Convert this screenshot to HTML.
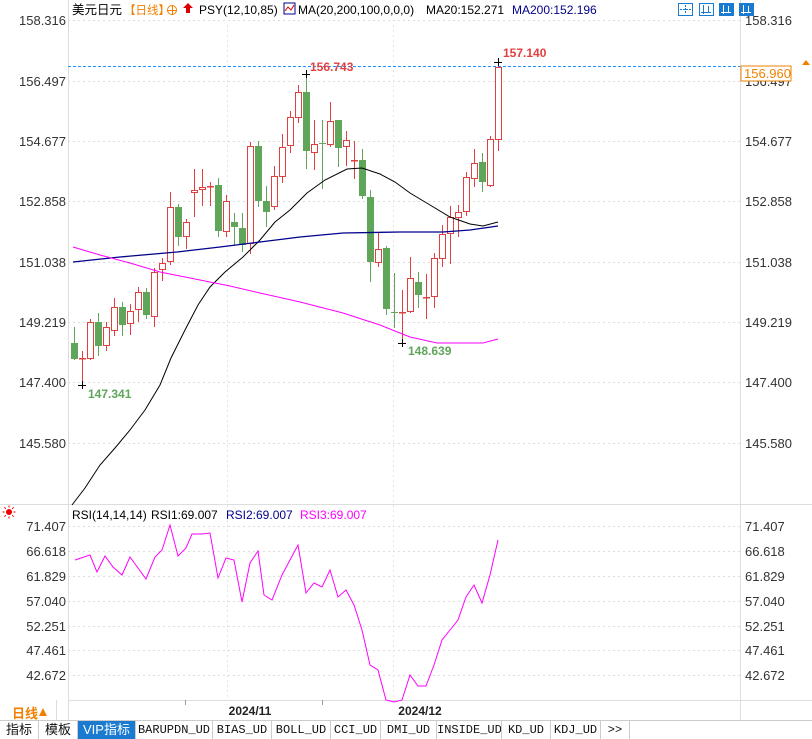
<!DOCTYPE html>
<html><head><meta charset="utf-8">
<style>
body{margin:0;width:812px;height:738px;overflow:hidden;background:#fff;font-family:"Liberation Sans","Noto Sans CJK SC",sans-serif;}
svg{position:absolute;left:0;top:0}
text{font-family:"Liberation Sans","Noto Sans CJK SC",sans-serif}
.tabs{position:absolute;left:0;top:720px;width:812px;height:18px;border-top:1px solid #ccc;background:#fff;display:flex;font-size:12px;font-family:"Liberation Mono","Noto Sans CJK SC",monospace}
.tabs div{border-right:1px solid #ccc;height:18px;line-height:18px;text-align:center;color:#111;white-space:nowrap;overflow:hidden}
.tabs .c{font-family:"Liberation Sans","Noto Sans CJK SC",sans-serif;font-size:13px}
</style></head><body>
<svg id="s" width="812" height="738" xmlns="http://www.w3.org/2000/svg"></svg>
<div class="tabs">
<div class="c" style="width:38px">指标</div><div class="c" style="width:38px">模板</div><div class="c" style="width:57px;background:#1a7ad0;color:#fff">VIP指标</div><div style="width:76px">BARUPDN_UD</div><div style="width:58px">BIAS_UD</div><div style="width:58px">BOLL_UD</div><div style="width:49px">CCI_UD</div><div style="width:55px">DMI_UD</div><div style="width:64px">INSIDE_UD</div><div style="width:48px">KD_UD</div><div style="width:49px">KDJ_UD</div><div style="width:28px">&gt;&gt;</div>
</div>
<script>
var S=document.getElementById('s'),h='';
function t(x,y,s,c,a,sz,w){h+='<text x="'+x+'" y="'+y+'" fill="'+c+'" font-size="'+(sz||13)+'" text-anchor="'+(a||'start')+'"'+(w?' font-weight="bold"':'')+'>'+s+'</text>';}
function L(x1,y1,x2,y2,c,d){h+='<line x1="'+x1+'" y1="'+y1+'" x2="'+x2+'" y2="'+y2+'" stroke="'+c+'" stroke-width="1"'+(d?' stroke-dasharray="'+d+'"':'')+'/>';}
function P(p,c,w){h+='<polyline fill="none" stroke="'+c+'" stroke-width="'+(w||1)+'" points="'+p+'"/>';}
var ly=[[20,'158.316'],[81,'156.497'],[141,'154.677'],[201,'152.858'],[262,'151.038'],[322,'149.219'],[382,'147.400'],[443,'145.580']];
ly.forEach(function(a){L(68,a[0]+0.5,740,a[0]+0.5,'#ddd','2,3');t(66,a[0]+5,a[1],'#333','end');t(745,a[0]+5,a[1],'#333');});
var ry=[[526,'71.407'],[551,'66.618'],[576,'61.829'],[601,'57.040'],[626,'52.251'],[650,'47.461'],[675,'42.672']];
ry.forEach(function(a){L(68,a[0]+0.5,740,a[0]+0.5,'#ddd','2,3');t(66,a[0]+5,a[1],'#333','end');t(745,a[0]+5,a[1],'#333');});
[227.5,393.5].forEach(function(x){L(x,25,x,700,'#e4e4e4','2,3');});
L(68.5,0,68.5,720,'#ddd');L(740.5,0,740.5,720,'#ddd');L(0,504.5,812,504.5,'#ddd');L(68,700.5,812,700.5,'#ddd');
var C=[[74,343,359,327,360,1],[82,358,359,351,385,0],[90,322,359,319,360,0],[98,322,346,313,356,1],[106,327,346,322,351,0],[114,307,331,298,336,0],[122,307,325,302,336,1],[130,311,324,304,335,0],[138,292,310,287,322,0],[146,292,315,288,319,1],[154,272,317,268,327,0],[162,263,270,258,281,0],[170,207,262,192,265,0],[178,207,237,204,246,1],[186,222,237,219,249,0],[194,190,193,169,217,0],[202,187,190,169,206,0],[210,186,187,182,206,0],[218,185,231,178,237,1],[226,201,232,195,237,0],[234,222,227,213,246,1],[242,228,245,213,252,1],[250,146,244,142,254,0],[258,146,201,141,207,1],[266,201,212,186,227,1],[274,176,207,166,210,0],[282,147,177,134,183,0],[290,117,146,111,153,0],[298,92,118,85,123,0],[306,92,151,74,169,1],[314,144,153,120,170,0],[322,143,144,120,189,1],[330,121,145,102,147,0],[338,120,148,120,167,1],[346,140,147,131,166,0],[354,160,161,141,179,0],[362,160,196,149,199,1],[370,197,262,190,282,1],[378,249,263,232,267,0],[386,248,309,246,315,1],[394,312,313,273,328,1],[402,312,313,290,343,0],[410,278,312,257,313,0],[418,282,295,272,308,1],[426,297,298,274,319,0],[434,258,297,253,308,0],[442,234,259,225,267,0],[450,217,234,206,264,0],[458,212,218,205,237,0],[466,177,212,172,216,0],[474,163,179,149,187,0],[482,162,182,153,192,1],[490,139,186,136,187,0],[498,67,140,62,151,0]];
C.forEach(function(c){var col=c[5]?'#5fa55a':'#e04040';L(c[0]+0.5,c[3],c[0]+0.5,c[4],col);
var bh=Math.max(1,c[2]-c[1]);
if(c[5])h+='<rect x="'+(c[0]-3)+'" y="'+c[1]+'" width="7" height="'+bh+'" fill="'+col+'"/>';
else h+='<rect x="'+(c[0]-2.5)+'" y="'+(c[1]+0.5)+'" width="6" height="'+Math.max(0.5,bh-1)+'" fill="#fff" stroke="'+col+'"/>';});
P('72,505 85,488 100,465 115,448 130,430 145,410 160,385 171,358 185,330 198,305 210,287 225,272 243,257 260,240 275,222 290,210 307,193 325,180 347,169 362,168 380,174 395,182 410,193 430,205 450,217 470,224 483,226 498,222','#000');
P('73,262 120,257 177,252 220,247 260,242 300,237 343,233 400,232 443,232 470,230 498,226','#00008b',1.3);
P('73,247 100,255 130,263 160,272 200,280 230,286 260,293 300,302 343,313 380,325 410,337 437,343 460,343 483,343 498,339','#ff00ff');
L(68,66.5,740,66.5,'#1e90ff','3,2');
h+='<rect x="741" y="66" width="50" height="15" fill="#fff" stroke="#f08000"/>';t(744,78,'156.960','#f08000');
h+='<polygon points="806,60 810,65 802,65" fill="#f08000"/>';
function plus(x,y){L(x-4,y+0.5,x+4,y+0.5,'#000');L(x+0.5,y-4,x+0.5,y+4,'#000');}
plus(306,74);plus(498,62);plus(402,343);plus(82,385);
t(310,71,'156.743','#e04040','start',12,1);t(503,57,'157.140','#e04040','start',12,1);
t(408,355,'148.639','#5fa55a','start',12,1);t(88,398,'147.341','#5fa55a','start',12,1);
// header
t(72,14,'美元日元','#000','start',12.5);t(124,14,'【日线】','#f08000','start',11.5);
h+='<circle cx="172" cy="10" r="4.5" fill="none" stroke="#f08000"/>';L(167,10.5,177,10.5,'#f08000');L(172.5,5,172.5,15,'#f08000');
h+='<polygon points="188,3 193,8 190,8 190,13 186,13 186,8 183,8" fill="#d00"/>';
t(199,14,'PSY(12,10,85)','#000','start',12);
h+='<rect x="284" y="3" width="11" height="11" fill="#fff" stroke="#00008b"/><polyline points="285,11 288,7 291,10 294,5" fill="none" stroke="#d00"/>';
t(298,14,'MA(20,200,100,0,0,0)','#000','start',12);t(426,14,'MA20:152.271','#000','start',12);t(512,14,'MA200:152.196','#00008b','start',12);
[678,699,719,739].forEach(function(x,i){h+='<rect x="'+(x+0.5)+'" y="3.5" width="14" height="12" fill="'+(i>1?'#1a7ad0':'#fff')+'" stroke="#1a7ad0"/>';
var c=i>1?'#fff':'#1a7ad0';if(i==0){L(x+7.5,5,x+7.5,14,c,'2,1');L(x+2,9.5,x+13,9.5,c,'2,1');}else{L(x+4.5,5,x+4.5,14,c);L(x+2,12.5,x+12,12.5,c);L(x+9.5,6,x+9.5,12,c);}});
// RSI
h+='<circle cx="9" cy="512" r="3" fill="#e00"/>';for(var a=0;a<8;a++){var r=a*Math.PI/4;L(9+4.5*Math.cos(r),512+4.5*Math.sin(r),9+6.5*Math.cos(r),512+6.5*Math.sin(r),'#e00');}
t(72,519,'RSI(14,14,14)','#000','start',12);t(151,519,'RSI1:69.007','#000','start',12);t(226,519,'RSI2:69.007','#00008b','start',12);t(300,519,'RSI3:69.007','#ff00ff','start',12);
P('75,560 90,555 97,572 105,556 113,567 122,575 130,557 138,568 146,579 155,557 162,550 170,525 178,556 186,548 192,534 202,534 210,533 218,578 226,558 234,560 242,602 250,563 258,551 264,595 272,600 282,575 290,560 298,545 306,593 314,583 322,587 330,570 338,597 346,590 354,605 362,630 370,665 378,670 386,700 394,702 402,700 410,675 418,686 426,686 434,665 442,640 450,630 458,620 466,597 474,585 482,603 490,575 498,540','#ff00ff');
t(12,718,'日线','#f08000','start',13,1);h+='<polygon points="43,708 47,716 39,716" fill="#f08000"/>';
L(56.5,700,56.5,720,'#ddd');
t(250,715,'2024/11','#222','middle',12,1);t(420,715,'2024/12','#222','middle',12,1);
L(185.5,700,185.5,705,'#999');L(322.5,700,322.5,705,'#999');
S.innerHTML=h;
</script>
</body></html>
